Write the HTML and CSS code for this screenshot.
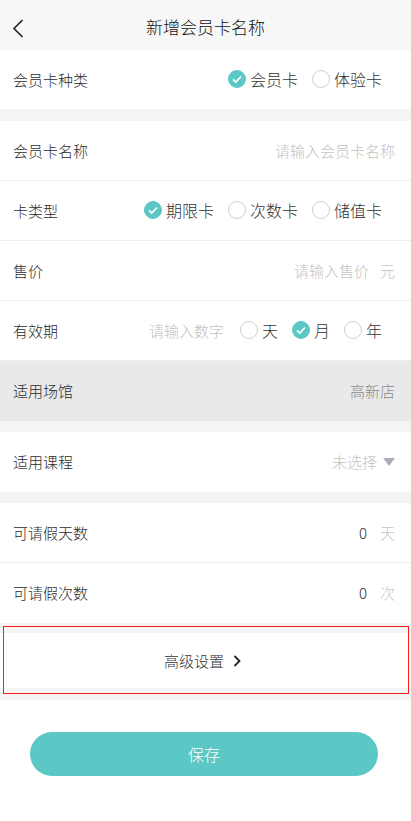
FILE: index.html
```html
<!DOCTYPE html>
<html lang="zh-CN">
<head>
<meta charset="utf-8">
<meta name="viewport" content="width=device-width, initial-scale=1">
<title>新增会员卡名称</title>
<link rel="stylesheet" href="styles.css">
</head>
<body>
<div class="page">
  <header class="header">
    <svg class="back" width="12" height="19" viewBox="0 0 12 19"><path d="M10.5 1 L2 9.5 L10.5 18" fill="none" stroke="#222" stroke-width="1.6"/></svg>
    <h1 class="title">新增会员卡名称</h1>
  </header>

  <div class="row row-first">
    <span class="label">会员卡种类</span>
    <div class="radios">
      <span class="opt"><span class="dot on"><svg viewBox="0 0 18 18"><path d="M5 9.3 L7.8 12 L13 6.5" fill="none" stroke="#fff" stroke-width="1.7"/></svg></span>会员卡</span>
      <span class="opt"><span class="dot"></span>体验卡</span>
    </div>
  </div>

  <div class="gap gap-12"></div>

  <div class="row line">
    <span class="label">会员卡名称</span>
    <span class="ph">请输入会员卡名称</span>
  </div>
  <div class="row line">
    <span class="label">卡类型</span>
    <div class="radios">
      <span class="opt"><span class="dot on"><svg viewBox="0 0 18 18"><path d="M5 9.3 L7.8 12 L13 6.5" fill="none" stroke="#fff" stroke-width="1.7"/></svg></span>期限卡</span>
      <span class="opt"><span class="dot"></span>次数卡</span>
      <span class="opt"><span class="dot"></span>储值卡</span>
    </div>
  </div>
  <div class="row line">
    <span class="label">售价</span>
    <span class="right"><span class="ph">请输入售价</span><span class="unit">元</span></span>
  </div>
  <div class="row line">
    <span class="label">有效期</span>
    <div class="radios">
      <span class="ph ph-num">请输入数字</span>
      <span class="opt opt-s"><span class="dot"></span>天</span>
      <span class="opt opt-s"><span class="dot on"><svg viewBox="0 0 18 18"><path d="M5 9.3 L7.8 12 L13 6.5" fill="none" stroke="#fff" stroke-width="1.7"/></svg></span>月</span>
      <span class="opt opt-s"><span class="dot"></span>年</span>
    </div>
  </div>
  <div class="row row-dim">
    <span class="label">适用场馆</span>
    <span class="val">高新店</span>
  </div>

  <div class="gap gap-11"></div>

  <div class="row">
    <span class="label">适用课程</span>
    <span class="right"><span class="ph">未选择</span><span class="tri"></span></span>
  </div>

  <div class="gap gap-11"></div>

  <div class="row line">
    <span class="label">可请假天数</span>
    <span class="right"><span class="num">0</span><span class="unit">天</span></span>
  </div>
  <div class="row">
    <span class="label">可请假次数</span>
    <span class="right"><span class="num">0</span><span class="unit">次</span></span>
  </div>

  <div class="adv-wrap">
    <div class="adv-row">
      <span class="adv-text">高级设置</span>
      <svg class="chev" width="8" height="12" viewBox="0 0 8 12"><path d="M1.5 1 L6.5 6 L1.5 11" fill="none" stroke="#222" stroke-width="1.8"/></svg>
    </div>
    <div class="mark"></div>
  </div>

  <div class="actions">
    <button class="save">保存</button>
  </div>
</div>
</body>
</html>
```

FILE: styles.css
```css
* { box-sizing: border-box; }
html, body { margin: 0; padding: 0; background: #fff; }
body {
  font-family: "Noto Sans CJK SC", "Noto Sans", sans-serif;
  font-weight: 300;
  color: #333;
  font-size: 15px;
}
.page { width: 411px; }

.header {
  height: 50px;
  background: #f7f7f7;
  display: flex;
  align-items: center;
  justify-content: center;
  position: relative;
  padding-top: 3px;
}
.back { position: absolute; left: 12px; top: 19px; }
.title {
  margin: 0;
  font-size: 17px;
  font-weight: 300;
  color: #111;
  line-height: 1;
}

.row {
  height: 60px;
  background: #fff;
  display: flex;
  align-items: center;
  justify-content: space-between;
  padding: 0 16px 1px 13px;
}
.row-first { height: 59px; }
.line { border-bottom: 1px solid #eeeeee; }
.row-dim { background: #e9e9e9; }

.label { color: #2b2b2b; font-size: 15px; line-height: 1; }
.ph { color: #c2c2c2; font-size: 15px; line-height: 1; }
.val { color: #8a8a8a; font-size: 15px; line-height: 1; }
.num { color: #333; font-size: 15px; line-height: 1; margin-right: 13px; }
.unit { color: #c6c6c6; font-size: 15px; line-height: 1; }
.right { display: flex; align-items: center; }
.right .ph + .unit { margin-left: 11px; }

.radios { display: flex; align-items: center; padding-right: 13px; }
.opt {
  display: flex;
  align-items: center;
  font-size: 16px;
  line-height: 1;
  color: #333;
  margin-left: 14px;
  gap: 4px;
}
.opt:first-child { margin-left: 0; }
.opt-s { margin-left: 14px; }
.ph-num { margin-right: 2px; }

.dot {
  width: 18px;
  height: 18px;
  border-radius: 50%;
  border: 1px solid #cfcfcf;
  background: #fff;
  display: inline-flex;
  flex: none;
}
.dot.on { background: #5bc8c5; border-color: #5bc8c5; }
.dot svg { width: 18px; height: 18px; margin: -1px; }

.tri {
  width: 0; height: 0;
  border-left: 6px solid transparent;
  border-right: 6px solid transparent;
  border-top: 8px solid #a9aeb8;
  margin-left: 6px;
}

.gap { background: #f4f4f4; }
.gap-12 { height: 12px; }
.gap-11 { height: 11px; }

.adv-wrap {
  background: #f4f4f4;
  padding: 10px 0 12px;
  position: relative;
}
.adv-row {
  height: 55px;
  background: #fff;
  display: flex;
  align-items: center;
  justify-content: center;
  gap: 9px;
  padding-right: 6px;
}
.adv-text { font-size: 15px; line-height: 1; color: #333; }
.chev { margin-top: 1px; }
.mark {
  position: absolute;
  left: 3px;
  right: 2px;
  top: 3px;
  bottom: 6px;
  border: 1.5px solid #ff1a1a;
  pointer-events: none;
}

.actions { padding: 32px 33px 0 30px; }
.save {
  display: block;
  width: 100%;
  height: 44px;
  border: none;
  border-radius: 22px;
  background: #5bc8c5;
  color: #fff;
  font-family: "Noto Sans CJK SC", "Noto Sans", sans-serif;
  font-weight: 300;
  font-size: 16px;
  padding: 0;
}
```
